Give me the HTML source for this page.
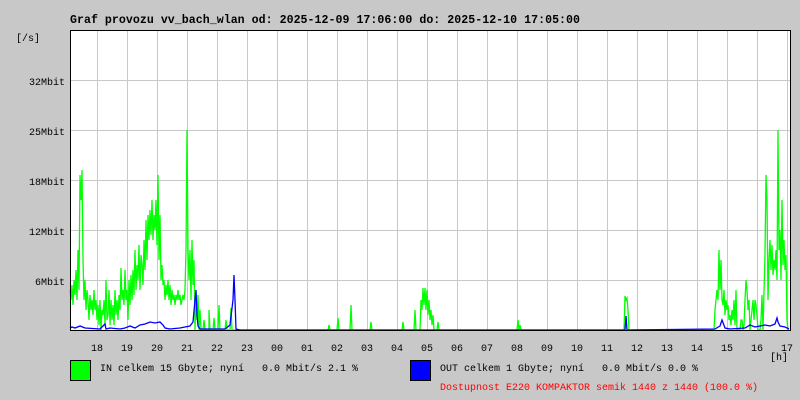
<!DOCTYPE html>
<html><head><meta charset="utf-8"><style>
body{margin:0;background:#c8c8c8;width:800px;height:400px;overflow:hidden;font-family:"Liberation Mono",monospace}
text{white-space:pre}
</style></head><body>
<svg width="800" height="400" xmlns="http://www.w3.org/2000/svg" style="position:absolute;left:0;top:0" font-family="Liberation Mono, monospace">
<rect x="0" y="0" width="800" height="400" fill="#c8c8c8"/>
<text x="70" y="23" font-size="11.6" font-weight="bold" fill="#000" textLength="510">Graf provozu vv_bach_wlan od: 2025-12-09 17:06:00 do: 2025-12-10 17:05:00</text>
<rect x="70" y="30" width="720" height="300" fill="#fff"/>
<g stroke="#c8c8c8" stroke-width="1">
<path d="M97.5 30V330M127.5 30V330M157.5 30V330M187.5 30V330M217.5 30V330M247.5 30V330M277.5 30V330M307.5 30V330M337.5 30V330M367.5 30V330M397.5 30V330M427.5 30V330M457.5 30V330M487.5 30V330M517.5 30V330M547.5 30V330M577.5 30V330M607.5 30V330M637.5 30V330M667.5 30V330M697.5 30V330M727.5 30V330M757.5 30V330M787.5 30V330"/>
<path d="M70 80.5H790M70 130.5H790M70 180.5H790M70 230.5H790M70 280.5H790"/>
</g>
<polyline fill="none" stroke="#00ff00" stroke-width="1.3" points="70,290 71,300 72,285 73,305 74,280 75,295 76,270 77,300 78,250 79,290 80,175 81,200 82,170 83,260 84,300 85,280 86,310 87,290 88,300 89,320 90,295 91,310 92,300 93,315 94,290 95,310 96,300 97,320 98,305 99,325 100,300 101,330 102,310 103,315 104,300 105,325 106,280 107,320 108,315 109,290 110,325 111,300 112,320 113,305 114,325 115,290 116,315 117,300 118,320 119,295 120,310 121,268 122,300 123,290 124,305 125,270 126,300 127,290 128,320 129,280 130,305 131,275 132,300 133,270 134,295 135,250 136,290 137,265 138,280 139,245 140,290 141,255 142,265 143,285 144,240 145,270 146,220 147,260 148,215 149,240 150,210 151,235 152,200 153,240 154,215 155,230 156,200 157,245 158,175 159,260 160,215 161,280 162,265 163,285 164,280 165,300 166,285 167,295 168,280 169,300 170,285 171,305 172,290 173,300 174,295 175,305 176,295 177,300 178,290 179,300 180,295 181,305 182,300 183,295 184,300 185,290 186,250 187,130 188,250 189,280 190,250 191,300 192,240 193,285 194,260 195,330 196,300 197,320 198,295 199,330 200,310 201,330 203,330 204,320 205,330 209,330 209,310 210,330 213,330 214,318 215,330 218,330 219,305 220,330 225,330 226,320 227,330 230,330 231,308 232,330 328,330 329,325 330,330 337,330 338,318 339,330 350,330 351,305 352,330 370,330 371,322 372,330 402,330 403,322 404,330 414,330 415,310 416,330 420,330 421,300 422,310 423,288 424,305 425,288 426,310 427,290 428,315 429,300 430,320 431,310 432,325 433,315 434,330 437,330 438,322 439,330 517,330 518,320 519,330 520,325 521,330 624,330 625,296 626,300 627,298 628,310 629,330 714,330 715,310 716,300 717,290 718,300 719,250 720,290 721,260 722,300 723,305 724,290 725,315 726,300 727,310 728,305 729,320 730,315 731,325 732,310 733,320 734,300 735,325 736,290 737,330 740,330 741,320 742,320 743,330 744,325 745,300 746,280 747,290 748,310 749,300 750,330 751,320 752,310 753,300 754,320 755,300 756,305 757,315 758,330 760,330 761,320 762,295 763,330 765,255 766,175 767,200 768,300 769,260 770,240 771,270 772,245 773,275 774,260 775,270 776,250 777,280 778,130 779,250 780,230 781,280 782,200 783,265 784,240 785,270 786,255 787,320 788,330 789,330"/>
<polyline fill="none" stroke="#0000ff" stroke-width="1.3" points="70,328 72,327 75,328 80,326 85,328 100,329 105,324 106,329 110,328 120,329 125,328 130,326 135,328 140,325 145,324 150,322 155,323 160,322 163,325 165,328 170,329 180,328 185,327 190,326 193,322 195,300 196,290 197,315 198,326 200,329 225,329 230,325 233,300 234,275 235,300 236,329 240,330 625,330 626,316 627,330 715,329 720,326 722,320 725,328 730,329 745,328 750,325 755,327 765,325 770,326 775,324 777,318 778,322 780,326 785,327 789,329"/>
<path d="M70.5 30V330.5H790.5V30M70 30.5H790" fill="none" stroke="#000" stroke-width="1"/>
<g font-size="10" fill="#000" text-anchor="end">
<text x="40" y="41">[/s]</text>
<text x="65" y="85">32Mbit</text>
<text x="65" y="135">25Mbit</text>
<text x="65" y="185">18Mbit</text>
<text x="65" y="235">12Mbit</text>
<text x="65" y="285">6Mbit</text>
</g>
<g font-size="10" fill="#000" text-anchor="middle">
<text x="97" y="351">18</text><text x="127" y="351">19</text><text x="157" y="351">20</text><text x="187" y="351">21</text><text x="217" y="351">22</text><text x="247" y="351">23</text><text x="277" y="351">00</text><text x="307" y="351">01</text><text x="337" y="351">02</text><text x="367" y="351">03</text><text x="397" y="351">04</text><text x="427" y="351">05</text><text x="457" y="351">06</text><text x="487" y="351">07</text><text x="517" y="351">08</text><text x="547" y="351">09</text><text x="577" y="351">10</text><text x="607" y="351">11</text><text x="637" y="351">12</text><text x="667" y="351">13</text><text x="697" y="351">14</text><text x="727" y="351">15</text><text x="757" y="351">16</text><text x="787" y="351">17</text>
<text x="779" y="360">[h]</text>
</g>
<rect x="70.5" y="360.5" width="20" height="20" fill="#00ff00" stroke="#000"/>
<rect x="410.5" y="360.5" width="20" height="20" fill="#0000ff" stroke="#000"/>
<g font-size="10" fill="#000">
<text x="100" y="371">IN celkem 15 Gbyte; nyní   0.0 Mbit/s 2.1 %</text>
<text x="440" y="371">OUT celkem 1 Gbyte; nyní   0.0 Mbit/s 0.0 %</text>
<text x="440" y="390" fill="#ff0000">Dostupnost E220 KOMPAKTOR semik 1440 z 1440 (100.0 %)</text>
</g>
</svg>
</body></html>
